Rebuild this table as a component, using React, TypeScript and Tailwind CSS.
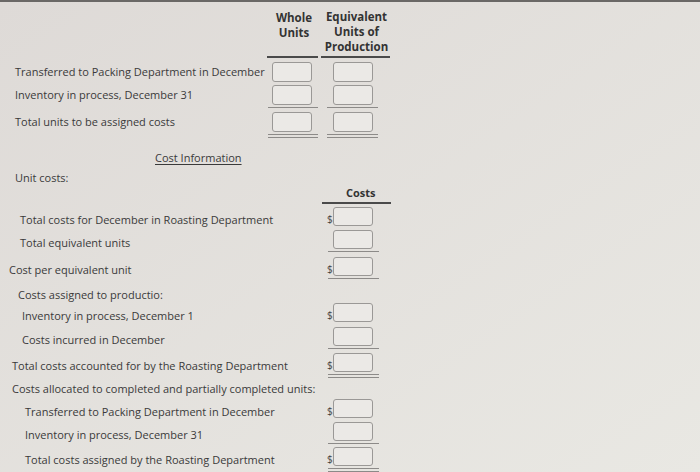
import React from "react";

const Box = ({ w = "w-[40px]", h = "h-[20px]" }: { w?: string; h?: string }) => (
  <div className={`${w} ${h} rounded-[3px] border border-[#9a9896] bg-[#ebe9e6]`} />
);

const Dollar = () => (
  <span className="w-[6px] text-[10px] leading-none text-[#444] mt-[4px]">$</span>
);

function UnitRow({ label, mt }: { label: string; mt: string }) {
  return (
    <div className={`flex items-center h-[20px] ${mt}`}>
      <div className="w-[270px] pl-[15px] whitespace-nowrap">{label}</div>
      <div className="w-[48px] pl-[2px]"><Box /></div>
      <div className="w-[74px] pl-[15px]"><Box /></div>
    </div>
  );
}

function CostRow({ label, mt, pl, dollar }: { label: string; mt: string; pl: string; dollar?: boolean }) {
  return (
    <div className={`flex items-center h-[19px] ${mt}`}>
      <div className={`w-[318px] ${pl} whitespace-nowrap mt-[6px]`}>{label}</div>
      <div className="flex items-center pl-[9px]">
        {dollar ? <Dollar /> : <span className="w-[6px]" />}
        <Box h="h-[19px]" />
      </div>
    </div>
  );
}

const SingleLineUnits = ({ mt }: { mt: string }) => (
  <div className={`flex h-[1px] ${mt}`}>
    <div className="ml-[268px] w-[50px] bg-[#8c8a88]" />
    <div className="ml-[9px] w-[51px] bg-[#8c8a88]" />
  </div>
);

const DoubleLineUnits = ({ mt }: { mt: string }) => (
  <div className={`flex h-[4px] ${mt}`}>
    <div className="ml-[268px] w-[50px] border-y border-[#8c8a88]" />
    <div className="ml-[9px] w-[51px] border-y border-[#8c8a88]" />
  </div>
);

const SingleLineCost = ({ mt }: { mt: string }) => (
  <div className={`flex h-[1px] ${mt}`}>
    <div className="ml-[328px] w-[51px] bg-[#8c8a88]" />
  </div>
);

const DoubleLineCost = ({ mt }: { mt: string }) => (
  <div className={`flex h-[4px] ${mt}`}>
    <div className="ml-[328px] w-[51px] border-y border-[#8c8a88]" />
  </div>
);

export default function App() {
  return (
    <div
      className="w-[700px] h-[472px] overflow-hidden bg-linear-to-br from-[#dedad7] to-[#e9e8e3] text-[#3a3a3a] text-[11px] leading-[14px]"
      style={{ fontFamily: '"Open Sans", "DejaVu Sans", sans-serif' }}
    >
      <div className="h-[2px] bg-[#6a6866]" />
      {/* header */}
      <div className="flex h-[56px] font-bold text-[11.5px] leading-[15px] text-[#333]">
        <div className="w-[267px]" />
        <div className="w-[51px] border-b-2 border-[#4a4a4a] pt-[8px] pl-[3px] text-center">
          Whole
          <br />
          Units
        </div>
        <div className="ml-[3px] w-[69px] border-b-2 border-[#4a4a4a] pt-[7px] pl-[2px] text-center">
          Equivalent
          <br />
          Units of
          <br />
          Production
        </div>
      </div>

      <UnitRow label="Transferred to Packing Department in December" mt="mt-[4px]" />
      <UnitRow label="Inventory in process, December 31" mt="mt-[3px]" />
      <SingleLineUnits mt="mt-[2px]" />
      <UnitRow label="Total units to be assigned costs" mt="mt-[4px]" />
      <DoubleLineUnits mt="mt-[2px]" />

      <div className="mt-[13px] h-[14px] pl-[155px]">
        <span className="underline underline-offset-2">Cost Information</span>
      </div>
      <div className="mt-[6px] h-[14px] pl-[15px]">Unit costs:</div>
      <div className="flex h-[18px] mt-[1px]">
        <div className="ml-[322px] w-[69px] border-b-2 border-[#4a4a4a] pl-[24px] font-bold text-[#333]">
          Costs
        </div>
      </div>

      <CostRow label="Total costs for December in Roasting Department" mt="mt-[3px]" pl="pl-[20px]" dollar />
      <CostRow label="Total equivalent units" mt="mt-[4px]" pl="pl-[20px]" />
      <SingleLineCost mt="mt-[2px]" />
      <CostRow label="Cost per equivalent unit" mt="mt-[5px]" pl="pl-[9px]" dollar />
      <SingleLineCost mt="mt-[2px]" />

      <div className="mt-[9px] h-[14px] pl-[18px]">Costs assigned to productio:</div>
      <CostRow label="Inventory in process, December 1" mt="mt-[1px]" pl="pl-[22px]" dollar />
      <CostRow label="Costs incurred in December" mt="mt-[5px]" pl="pl-[22px]" />
      <SingleLineCost mt="mt-[2px]" />
      <CostRow label="Total costs accounted for by the Roasting Department" mt="mt-[4px]" pl="pl-[12px]" dollar />
      <DoubleLineCost mt="mt-[2px]" />

      <div className="mt-[4px] h-[14px] pl-[12px]">Costs allocated to completed and partially completed units:</div>
      <CostRow label="Transferred to Packing Department in December" mt="mt-[3px]" pl="pl-[25px]" dollar />
      <CostRow label="Inventory in process, December 31" mt="mt-[4px]" pl="pl-[25px]" />
      <SingleLineCost mt="mt-[2px]" />
      <CostRow label="Total costs assigned by the Roasting Department" mt="mt-[3px]" pl="pl-[25px]" dollar />
      <DoubleLineCost mt="mt-[2px]" />
    </div>
  );
}
